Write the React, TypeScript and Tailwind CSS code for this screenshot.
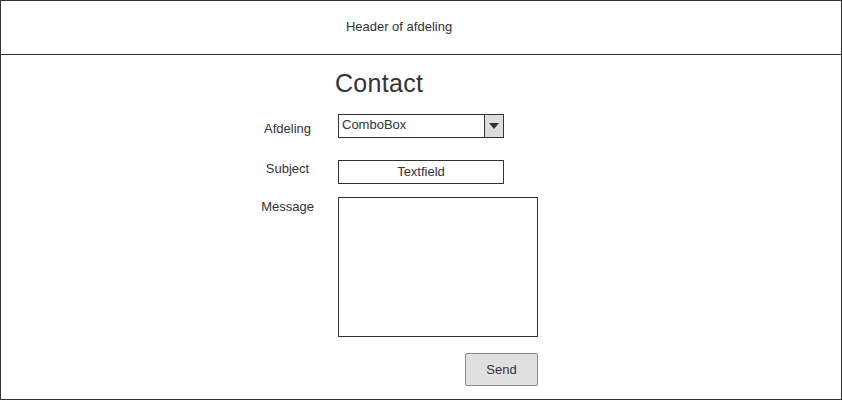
import React from "react";

const font = { fontFamily: '"Liberation Sans", Arial, sans-serif' };

const App = () => {
  return (
    <div
      className="w-[842px] h-[400px] border border-[#333] bg-white text-[#333] text-[13px] leading-[16px] overflow-hidden"
      style={font}
    >
      <div className="h-[54px] border-b border-[#333] flex items-center justify-center pr-[44px] pb-[2px]">
        Header of afdeling
      </div>

      <div className="pl-[334px] pt-[13px]">
        <h1 className="text-[25px] leading-[30px] tracking-[0.3px]">Contact</h1>
      </div>

      <div className="ml-[249px] mt-[16px] flex flex-col">
        <div className="flex items-start">
          <div className="w-[75px] text-center pt-[7px]">Afdeling</div>
          <div className="ml-[13px] w-[166px] h-[24px] border border-[#333] flex">
            <div className="flex-1 pl-[3px] pt-[2px]">ComboBox</div>
            <div className="w-[19px] border-l border-[#333] bg-[#ddd] flex items-center justify-center">
              <div className="w-0 h-0 border-l-[5px] border-r-[5px] border-t-[6px] border-l-transparent border-r-transparent border-t-[#333]" />
            </div>
          </div>
        </div>

        <div className="flex items-start mt-[22px]">
          <div className="w-[75px] text-center pt-[1px]">Subject</div>
          <div className="ml-[13px] w-[166px] h-[24px] border border-[#333] flex items-center justify-center">
            Textfield
          </div>
        </div>

        <div className="flex items-start mt-[13px]">
          <div className="w-[75px] text-center pt-[2px]">Message</div>
          <div className="ml-[13px] flex flex-col items-end">
            <div className="w-[200px] h-[140px] border border-[#333]" />
            <button className="mt-[16px] w-[73px] h-[33px] bg-[#e0e0e0] border border-[#888] rounded-[2px] text-[#333] text-[13px]">
              Send
            </button>
          </div>
        </div>
      </div>
    </div>
  );
};

export default App;
